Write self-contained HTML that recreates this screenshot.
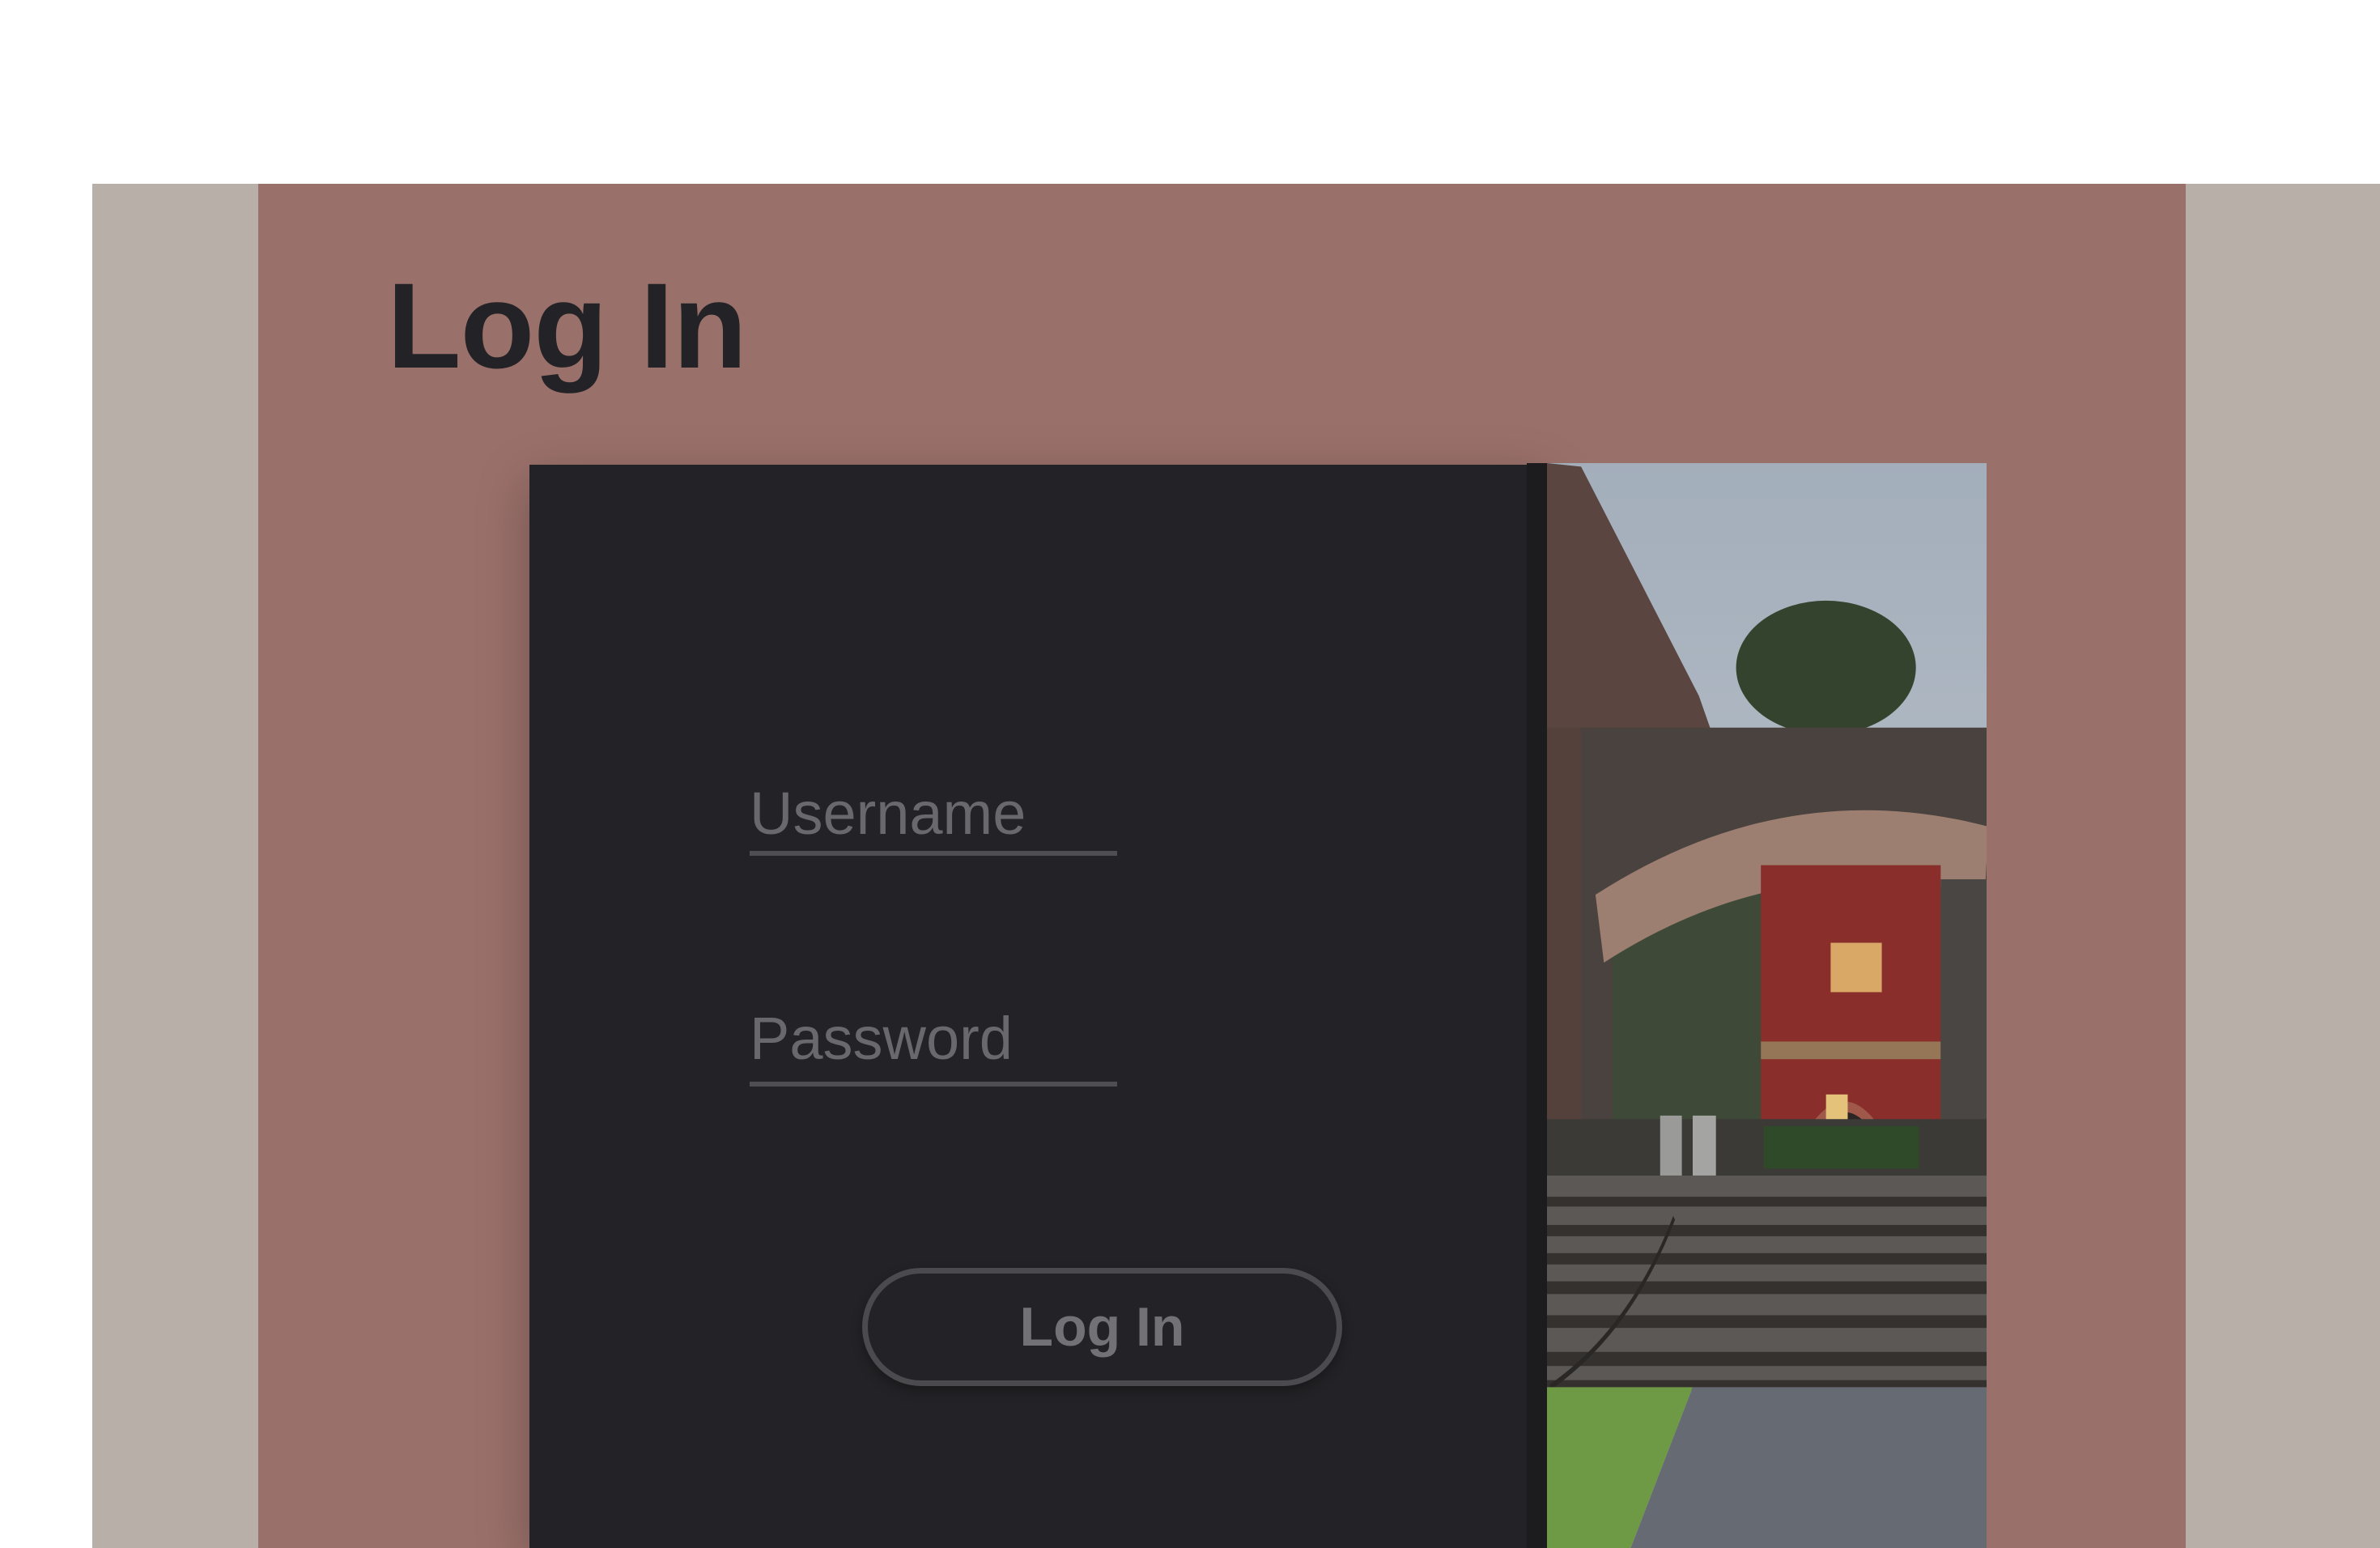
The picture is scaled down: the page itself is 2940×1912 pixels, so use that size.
<!DOCTYPE html>
<html><head><meta charset="utf-8"><style>
html,body{margin:0;padding:0;width:2940px;height:1912px;overflow:hidden;background:#fff;position:relative;font-family:"Liberation Sans",sans-serif}
.gray{position:absolute;left:114px;top:227px;width:2826px;height:1685px;background:#b8afa9}
.panel{position:absolute;left:319px;top:227px;width:2381px;height:1685px;background:#9a706a}
h1{position:absolute;left:478px;top:316px;margin:0;font-size:150px;font-weight:bold;color:#232226;letter-spacing:-1px}
.card{position:absolute;left:654px;top:574px;width:1257px;height:1338px;background:#232226;box-shadow:0 20px 60px rgba(0,0,0,0.25)}
.stripe{position:absolute;left:1886px;top:572px;width:25px;height:1340px;background:#1c1c1f}
.lbl{position:absolute;left:926px;font-size:74px;color:#69686c}
.line{position:absolute;left:926px;width:454px;height:6px;background:#4f4e52}
.btn{position:absolute;left:1065px;top:1566px;width:593px;height:146px;box-sizing:border-box;border:7px solid #4b4a4e;border-radius:80px;text-align:center;line-height:132px;font-size:68px;font-weight:bold;color:#727175;box-shadow:0 6px 14px rgba(0,0,0,0.3)}
svg{position:absolute;left:1911px;top:572px}
</style></head><body>
<div class="gray"></div>
<div class="panel"></div>
<h1>Log In</h1>
<div class="card"></div>
<div class="stripe"></div>
<div class="lbl" style="top:962px">Username</div>
<div class="line" style="top:1051px"></div>
<div class="lbl" style="top:1240px">Password</div>
<div class="line" style="top:1336px"></div>
<div class="btn">Log In</div>
<svg width="543" height="1340" viewBox="30 30 1418 1538" preserveAspectRatio="none">
<defs><linearGradient id="sk" x1="0" y1="0" x2="0" y2="1"><stop offset="0" stop-color="#a3aebb"/><stop offset="1" stop-color="#c9cdd2"/></linearGradient></defs>
<rect x="30" y="14" width="1418" height="1554" fill="url(#sk)"/>
<polygon points="30,30 140,35 520,360 560,410 560,1000 30,1000" fill="#5a4540"/>
<ellipse cx="930" cy="320" rx="290" ry="95" fill="#34432e"/>
<rect x="30" y="405" width="1418" height="640" fill="#4a423e"/>
<rect x="30" y="405" width="110" height="640" fill="#55413b"/>
<path d="M30,1040 L240,1040 L240,700 Q800,560 1448,620 L1448,1040 Z" fill="#3e4a37"/>
<path d="M200,690 Q800,520 1448,595" stroke="#9d7f72" stroke-width="100" fill="none"/>
<rect x="720" y="600" width="580" height="390" fill="#892e2a"/>
<rect x="720" y="850" width="580" height="25" fill="#957656"/>
<rect x="945" y="710" width="165" height="70" fill="#d9a866"/>
<path d="M850,990 Q990,880 1130,990 Z" fill="#a0584a"/>
<path d="M880,990 Q990,910 1100,990 Z" fill="#2b2624"/>
<rect x="930" y="925" width="70" height="65" fill="#e5c27a"/>
<rect x="1300" y="620" width="148" height="380" fill="#4a4644"/>
<rect x="30" y="960" width="1418" height="80" fill="#3b3a36"/>
<rect x="730" y="970" width="500" height="60" fill="#2f4a28"/>
<rect x="395" y="955" width="70" height="85" fill="#9a9a98"/>
<rect x="500" y="955" width="75" height="85" fill="#a4a4a2"/>
<g fill="#5c5856"><rect x="30" y="1040" width="1418" height="300"/></g>
<g fill="#34312f">
<rect x="30" y="1070" width="1418" height="14"/><rect x="30" y="1110" width="1418" height="16"/><rect x="30" y="1150" width="1418" height="16"/><rect x="30" y="1190" width="1418" height="18"/><rect x="30" y="1238" width="1418" height="18"/><rect x="30" y="1290" width="1418" height="20"/><rect x="30" y="1330" width="1418" height="14"/></g>
<path d="M40,1340 Q300,1260 440,1100" stroke="#2a2826" stroke-width="8" fill="none"/>
<polygon points="30,1340 500,1340 300,1568 30,1568" fill="#6f9a45"/>
<polygon points="500,1340 1448,1340 1448,1568 300,1568" fill="#656a73"/>
</svg>
</body></html>
